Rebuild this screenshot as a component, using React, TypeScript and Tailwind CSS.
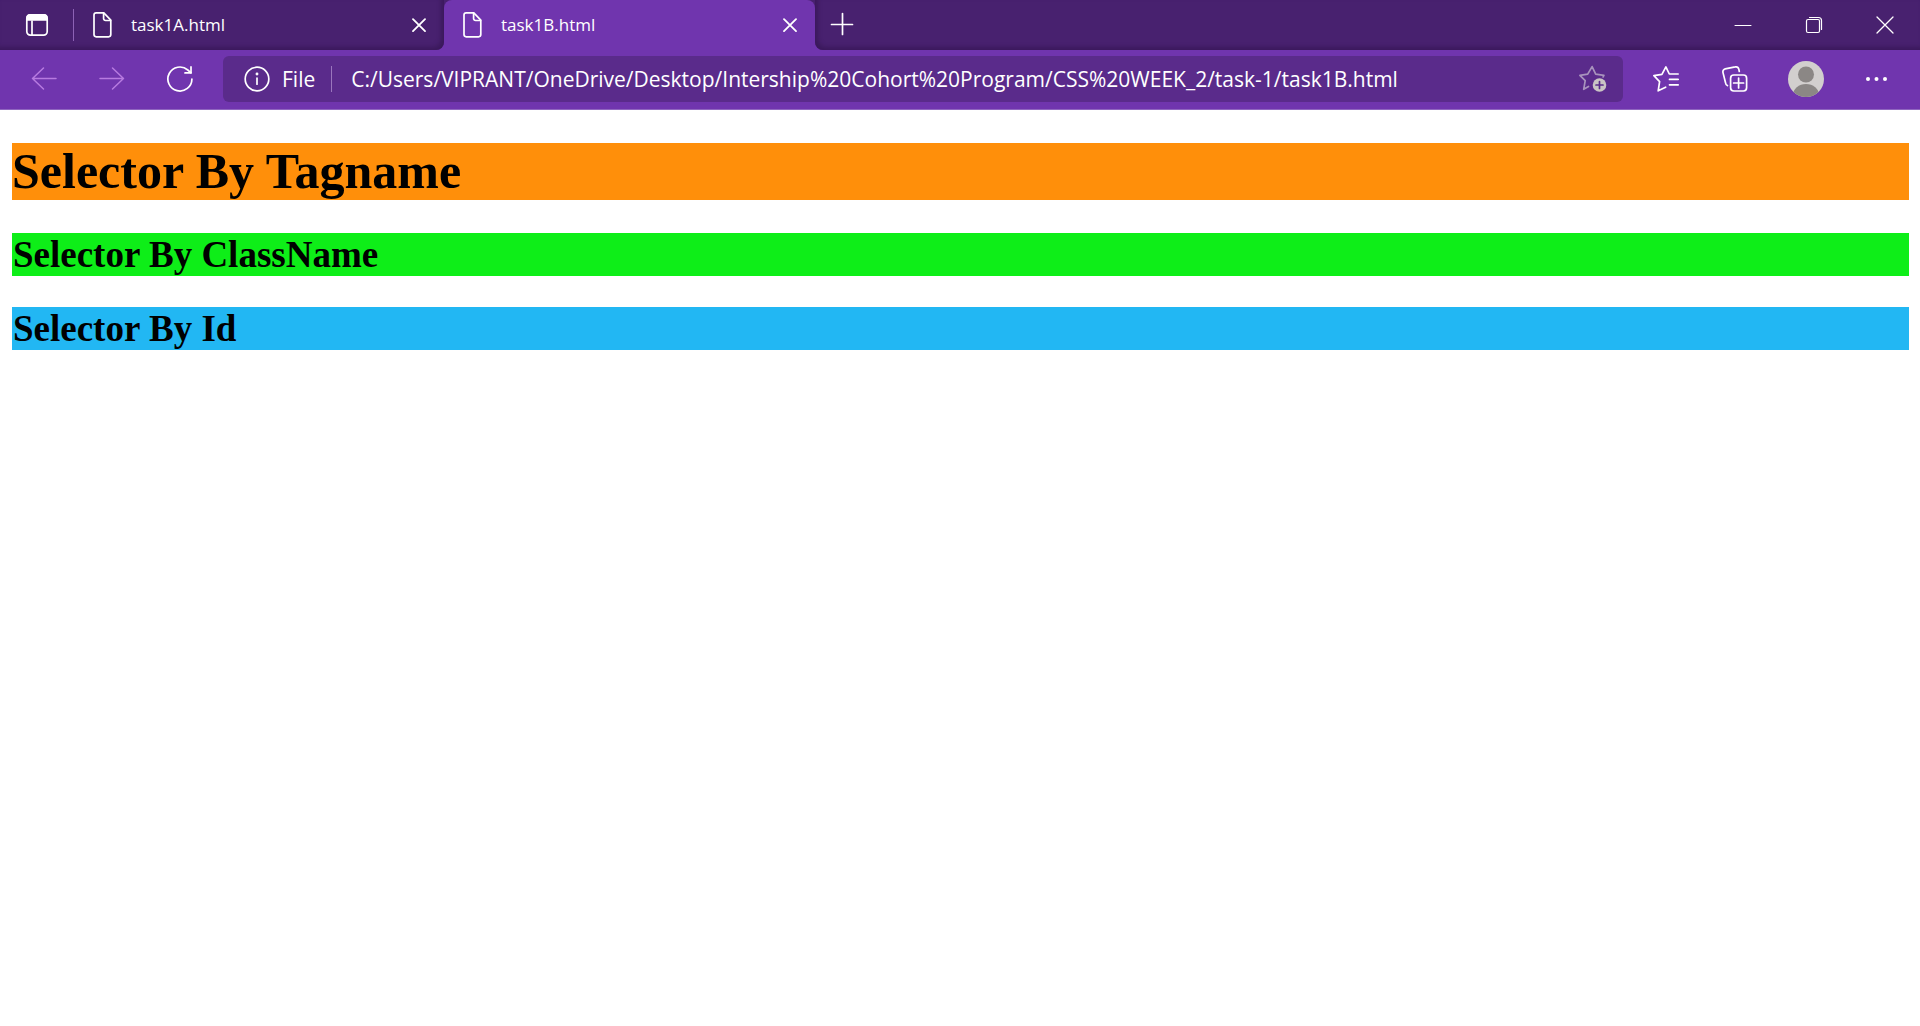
import type { ReactNode } from "react";

function Icon({ size, label, className, children }: { size: number; label?: string; className?: string; children: ReactNode }) {
  return (
    <svg
      width={size}
      height={size}
      viewBox={`0 0 ${size} ${size}`}
      fill="none"
      stroke="currentColor"
      strokeWidth="1.7"
      strokeLinecap="round"
      strokeLinejoin="round"
      aria-hidden={label ? undefined : true}
      aria-label={label}
      className={className}
    >
      {children}
    </svg>
  );
}

function PageIcon() {
  return (
    <Icon size={26} className="shrink-0">
      <path d="M6.2 .9h7.6l7 7.2v14.5a2.2 2.2 0 0 1-2.2 2.2H6.2A2.2 2.2 0 0 1 4 22.6V3.1A2.2 2.2 0 0 1 6.2 .9z" />
      <path d="M13.6 1.2v5.4a1.9 1.9 0 0 0 1.9 1.9h5" />
    </Icon>
  );
}

function CloseIcon() {
  return (
    <Icon size={14}>
      <path d="M1 1.2l12 12M13 1.2l-12 12" strokeWidth="1.8" />
    </Icon>
  );
}

function Tab({ title }: { title: string }) {
  return (
    <>
      <button type="button" role="tab" className="flex h-full min-w-0 flex-1 items-center gap-[15px] pl-4 pb-px text-left">
        <PageIcon />
        <span className="truncate text-[17px] leading-6">{title}</span>
      </button>
      <button type="button" aria-label={`Close ${title}`} className="flex size-7 items-center justify-center">
        <CloseIcon />
      </button>
    </>
  );
}

function WindowButton({ label, children }: { label: string; children: ReactNode }) {
  return (
    <button type="button" aria-label={label} className="flex h-full w-[71px] items-center justify-center">
      {children}
    </button>
  );
}

function ToolButton({ label, wide, dim, children }: { label: string; wide?: boolean; dim?: boolean; children: ReactNode }) {
  return (
    <button
      type="button"
      aria-label={label}
      className={`flex h-full items-center justify-center ${wide ? "w-[70px]" : "w-[68px]"} ${dim ? "text-[#b77be0]" : "text-white"}`}
    >
      {children}
    </button>
  );
}

function TabStrip() {
  return (
    <div className="flex h-[50px] bg-linear-to-b from-[#48216f] from-50% to-[#7035ae] to-50%">
      <div className="flex w-[444px] items-center rounded-br-lg bg-[#48216f] pr-[11px] shadow-[inset_-3px_-3px_4px_#3b195c]">
        <button type="button" aria-label="Tab actions" className="flex h-full w-[73px] items-center justify-center">
          <Icon size={24}>
            <rect x="1.8" y="1.8" width="20.4" height="20.4" rx="3.6" />
            <path d="M2 7V5a3.2 3.2 0 0 1 3.2-3.2h13.6A3.2 3.2 0 0 1 22 5v2z" fill="currentColor" />
            <path d="M7 8v14" />
          </Icon>
        </button>
        <span className="h-8 w-px bg-[#8d62b5]" />
        <Tab title="task1A.html" />
      </div>
      <div className="flex w-[371px] items-center rounded-t-lg bg-[#7035ae] pr-[11px]">
        <Tab title="task1B.html" />
      </div>
      <div className="flex flex-1 items-center rounded-bl-lg bg-[#48216f] shadow-[inset_3px_-3px_4px_#3b195c]">
        <button type="button" aria-label="New tab" className="ml-[3px] flex h-full w-12 items-center justify-center pb-0.5">
          <Icon size={24}>
            <path d="M12.5 1.5v21M1.5 12.5h21" />
          </Icon>
        </button>
        <div className="ml-auto flex h-full">
          <WindowButton label="Minimize">
            <Icon size={18}>
              <path d="M1 9.5h16" strokeWidth="1" />
            </Icon>
          </WindowButton>
          <WindowButton label="Restore">
            <Icon size={18}>
              <g strokeWidth="1.2">
                <rect x="1.5" y="3.5" width="13" height="13" rx="1.5" />
                <path d="M4.5 1.5h9a3 3 0 0 1 3 3v9" />
              </g>
            </Icon>
          </WindowButton>
          <WindowButton label="Close window">
            <Icon size={18}>
              <path d="M1 1l16 16M17 1L1 17" strokeWidth="1.3" />
            </Icon>
          </WindowButton>
        </div>
      </div>
    </div>
  );
}

function Toolbar() {
  return (
    <div className="flex h-[60px] items-center border-b border-[#8f66bf] bg-[#7035ae] pb-px pl-[10px] pr-[9px]">
      <ToolButton label="Back" dim>
        <Icon size={26}>
          <path d="M25 12.5H1.5M12.5 2L1.5 12.5l11 10.5" strokeWidth="1.5" />
        </Icon>
      </ToolButton>
      <ToolButton label="Forward" dim>
        <Icon size={26}>
          <path d="M1 12.5h23.5M13.5 2l11 10.5-11 10.5" strokeWidth="1.5" />
        </Icon>
      </ToolButton>
      <ToolButton label="Refresh">
        <Icon size={26}>
          <path d="M24.9 13A12 12 0 1 1 20.8 4L24 6.8" />
          <path d="M24 .9v6h-6" />
        </Icon>
      </ToolButton>
      <div className="ml-[9px] flex h-[46px] min-w-0 flex-1 items-center rounded-md bg-[#5a2b8b] pl-[21px] pr-4">
        <button type="button" className="flex items-center gap-3 text-[21px] leading-7">
          <Icon size={26}>
            <circle cx="13" cy="13" r="11.8" />
            <path d="M13 12v6.2" />
            <circle cx="13" cy="8" r="0.6" fill="currentColor" />
          </Icon>
          File
        </button>
        <span className="ml-4 h-[26px] w-px bg-[#9a76bd]" />
        <input
          type="text"
          aria-label="Address"
          defaultValue="C:/Users/VIPRANT/OneDrive/Desktop/Intership%20Cohort%20Program/CSS%20WEEK_2/task-1/task1B.html"
          className="ml-[19px] min-w-0 flex-1 bg-transparent text-[21px] leading-7 outline-none"
        />
        <button type="button" aria-label="Add to favorites" className="text-[#a893bd]">
          <Icon size={28}>
            <path d="M9.5 21.5l-4.8 2.8 1.5-8.6L.9 10.3l7.8-1.2L13.1 1.6l3.6 7.5 8.2 1.2-.8 1.6" />
            <circle cx="20.5" cy="20" r="6.8" fill="#c9c4c4" stroke="none" />
            <path d="M20.5 16.5v7M17 20h7" stroke="#5a2b8b" />
          </Icon>
        </button>
      </div>
      <div className="ml-2 flex h-full">
        <ToolButton label="Favorites" wide>
          <Icon size={26}>
            <path d="M12.6 21.2l-7.4 3.6 1.4-9.2L.9 9.6l8-1.2L12.9.9l3.4 7.1h8.9M16.5 13.4h8.7M16.5 18.8h8.7" />
          </Icon>
        </ToolButton>
        <ToolButton label="Collections" wide>
          <Icon size={28}>
            <path d="M5.4 20.6A3.2 3.2 0 0 1 3.6 18L1 7.6a3 3 0 0 1 2.2-3.7l10-2a3 3 0 0 1 3.6 2.2l.5 2.4" />
            <rect x="8.6" y="10" width="16" height="16" rx="3.2" />
            <path d="M16.6 13v10M11.6 18h10" />
          </Icon>
        </ToolButton>
        <ToolButton label="Profile" wide>
          <span className="size-9 overflow-hidden rounded-full bg-[#d2cfce]">
            <svg width="36" height="36" viewBox="0 0 36 36" fill="#8b8785" aria-hidden="true">
              <circle cx="18" cy="13.5" r="8" />
              <ellipse cx="18" cy="34" rx="13" ry="11" />
            </svg>
          </span>
        </ToolButton>
        <ToolButton label="Settings and more" wide>
          <Icon size={26}>
            <g fill="currentColor" stroke="none">
              <circle cx="5" cy="13" r="2" />
              <circle cx="13.5" cy="13" r="2" />
              <circle cx="22" cy="13" r="2" />
            </g>
          </Icon>
        </ToolButton>
      </div>
    </div>
  );
}

export default function App() {
  return (
    <div className="min-h-screen bg-white">
      <header className="font-['Open_Sans',sans-serif] text-white">
        <TabStrip />
        <Toolbar />
      </header>
      <main className="flex flex-col pl-3 pr-[11px] pt-[33px] font-['Liberation_Serif',serif] font-bold text-black">
        <h1 className="bg-[#ff8f0a] text-[50px] leading-[57px]">Selector By Tagname</h1>
        <h2 className="mt-[33px] bg-[#0eee18] pl-px text-[37px] leading-[43px]">Selector By ClassName</h2>
        <h2 className="mt-[31px] bg-[#22b7f3] pl-px text-[37px] leading-[43px]">Selector By Id</h2>
      </main>
    </div>
  );
}
